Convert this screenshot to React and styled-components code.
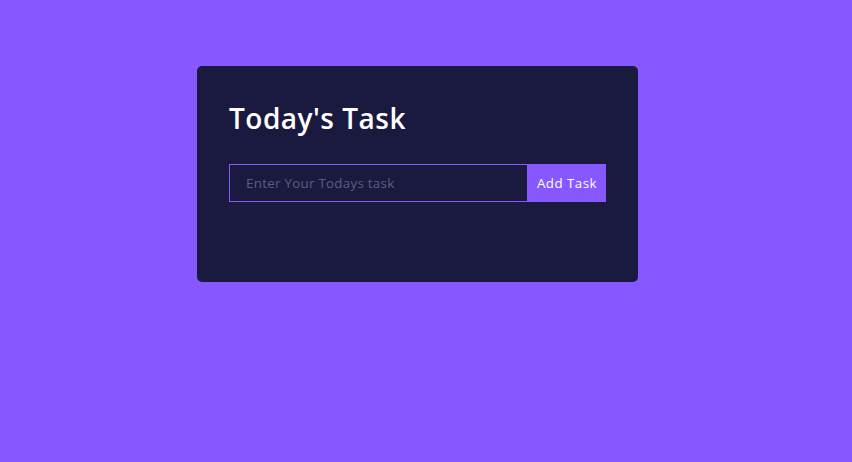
import React from "react";
import styled, { createGlobalStyle } from "styled-components";

const Global = createGlobalStyle`
  html, body { margin: 0; padding: 0; }
  body {
    background: #8758ff;
    font-family: "Open Sans", "Liberation Sans", sans-serif;
    min-height: 100vh;
  }
  * { box-sizing: border-box; }
`;

const Page = styled.div`
  display: flex;
  justify-content: flex-start;
  padding: 66px 0 0 197px;
`;

const Card = styled.div`
  display: flex;
  flex-direction: column;
  background: #1a1a40;
  width: 441px;
  padding: 32px;
  border-radius: 5px;
`;

const Title = styled.h1`
  margin: 0 0 24px;
  color: #fff;
  font-size: 28px;
  font-weight: 600;
  line-height: 40px;
  letter-spacing: 0.5px;
`;

const Form = styled.form`
  display: flex;
  margin: 2px 0 48px;
`;

const Input = styled.input`
  width: 299px;
  height: 38px;
  background: none;
  border: 1px solid #8758ff;
  outline: none;
  padding: 0 16px;
  color: #fff;
  font-family: inherit;
  font-size: 13.3px;
  letter-spacing: 0.3px;
  &::placeholder { color: #5d5c7e; }
`;

const Button = styled.button`
  width: 78px;
  height: 38px;
  background: #8758ff;
  color: #fff;
  border: none;
  padding: 0;
  font-family: inherit;
  font-size: 13.3px;
  font-weight: 500;
  letter-spacing: 0.5px;
  cursor: pointer;
`;

export default function App() {
  return (
    <>
      <Global />
      <Page>
        <Card>
          <Title>Today's Task</Title>
          <Form onSubmit={(e) => e.preventDefault()}>
            <Input placeholder="Enter Your Todays task" />
            <Button type="submit">Add Task</Button>
          </Form>
        </Card>
      </Page>
    </>
  );
}
